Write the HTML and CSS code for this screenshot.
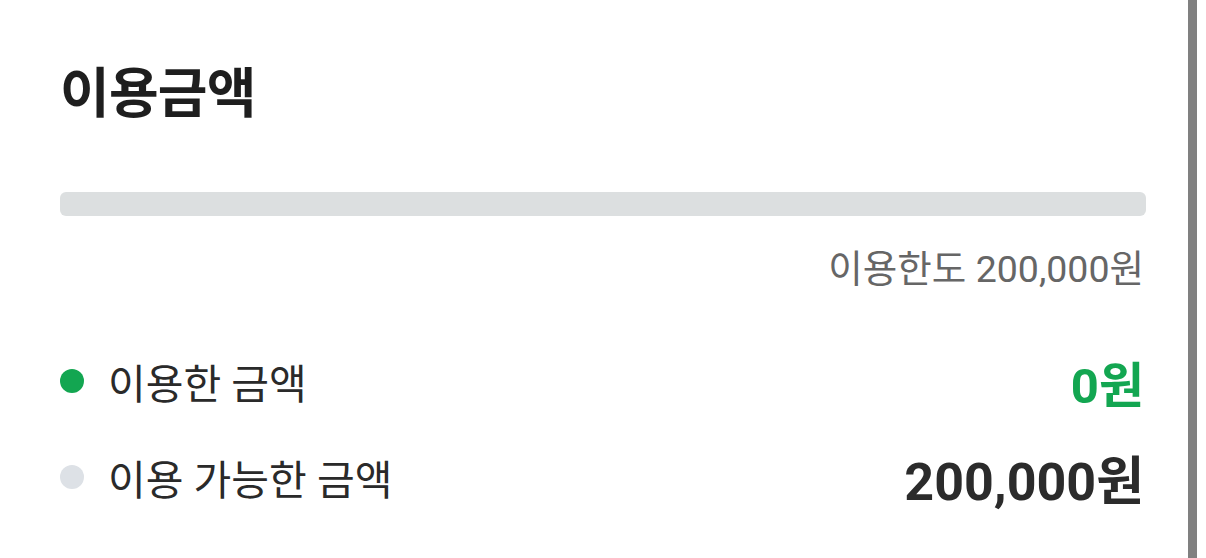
FILE: index.html
```html
<!DOCTYPE html>
<html lang="ko">
<head>
<meta charset="utf-8">
<link rel="stylesheet" href="styles.css">
</head>
<body>
<div class="page">
  <main class="card">
    <h1 class="title">이용금액</h1>
    <div class="bar"><div class="bar-fill" style="width:0%"></div></div>
    <div class="limit">이용한도 200,000원</div>
    <ul class="rows">
      <li class="row">
        <span class="dot dot-used"></span>
        <span class="label">이용한 금액</span>
        <span class="value value-used">0원</span>
      </li>
      <li class="row">
        <span class="dot dot-avail"></span>
        <span class="label">이용 가능한 금액</span>
        <span class="value value-avail">200,000원</span>
      </li>
    </ul>
  </main>
  <div class="scrollbar"></div>
</div>
</body>
</html>
```
FILE: styles.css
```css
* { box-sizing: border-box; }
html, body {
  margin: 0;
  padding: 0;
  background: #ffffff;
  font-family: Roboto, "Noto Sans CJK KR", sans-serif;
}
.page {
  display: flex;
  width: 1206px;
  height: 558px;
  overflow: hidden;
}
.card {
  flex: 1;
  padding: 60px 42px 0 60px;
}
.scrollbar {
  width: 9px;
  margin-right: 9px;
  background: #808080;
}
.title {
  margin: 0;
  font-size: 54px;
  font-weight: 700;
  line-height: 70px;
  color: #1e1e1e;
  letter-spacing: -0.8px;
}
.bar {
  margin-top: 62px;
  height: 24px;
  border-radius: 6px;
  background: #dcdfe0;
  overflow: hidden;
}
.bar-fill {
  height: 100%;
  background: #13a651;
}
.limit {
  margin-top: 30px;
  text-align: right;
  font-size: 37.5px;
  line-height: 46px;
  color: #666666;
  padding-right: 2px;
}
.rows {
  list-style: none;
  margin: 62px 0 0;
  padding: 0;
  display: flex;
  flex-direction: column;
  gap: 42px;
}
.row {
  display: flex;
  align-items: center;
  height: 54px;
}
.dot {
  width: 24px;
  height: 24px;
  border-radius: 50%;
  flex: none;
}
.dot-used { background: #13a651; }
.dot-avail { background: #dde1e6; }
.label {
  margin-left: 24px;
  font-size: 41px;
  color: #2a2a2a;
  flex: 1;
}
.value {
  font-size: 52px;
  font-weight: 700;
  padding-right: 2px;
}
.value-used { color: #13a651; font-size: 49px; }
.value-avail { color: #2b2b2b; }
```
